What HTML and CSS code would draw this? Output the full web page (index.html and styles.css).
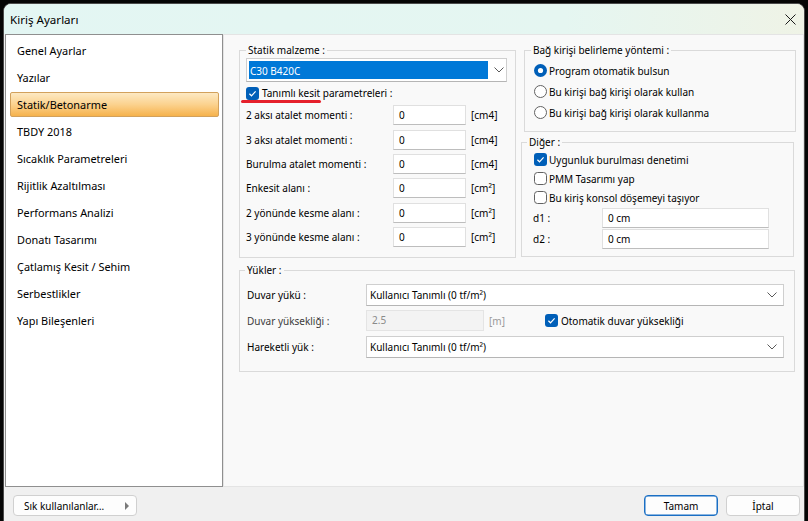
FILE: index.html
```html
<!DOCTYPE html>
<html lang="tr">
<head>
<meta charset="UTF-8">
<title>Kiriş Ayarları</title>
<link rel="stylesheet" href="styles.css">
</head>
<body>
<div class="win">
  <div class="titlebar">
    <span class="title">Kiriş Ayarları</span>
    <svg class="close" width="11" height="11" viewBox="0 0 11 11"><path d="M0.5 0.5L10.5 10.5M10.5 0.5L0.5 10.5" stroke="#1a1a1a" stroke-width="1" fill="none"/></svg>
  </div>

  <div class="main">
    <ul class="nav">
      <li>Genel Ayarlar</li>
      <li>Yazılar</li>
      <li class="on">Statik/Betonarme</li>
      <li>TBDY 2018</li>
      <li>Sıcaklık Parametreleri</li>
      <li>Rijitlik Azaltılması</li>
      <li>Performans Analizi</li>
      <li>Donatı Tasarımı</li>
      <li>Çatlamış Kesit / Sehim</li>
      <li>Serbestlikler</li>
      <li>Yapı Bileşenleri</li>
    </ul>

    <div class="content">
      <div class="top">
        <!-- statik malzeme -->
        <fieldset class="grp statik">
          <legend>Statik malzeme :</legend>
          <div class="sel sel-mat">
            <span class="hl">C30 B420C</span>
            <svg class="chev" width="10" height="6" viewBox="0 0 10 6"><path d="M0.5 0.5L5 5L9.5 0.5" stroke="#5a5a5a" fill="none"/></svg>
          </div>
          <div class="check mark-row">
            <svg width="13" height="13" viewBox="0 0 13 13"><rect width="13" height="13" rx="3" fill="#005fb8"/><path d="M3.4 6.8L5.5 8.8L9.6 4.4" stroke="#fff" stroke-width="1.2" fill="none"/></svg>
            <span>Tanımlı kesit parametreleri :</span>
            <i class="redline"></i>
          </div>
          <div class="frow"><label>2 aksı atalet momenti :</label><span class="inp">0</span><span class="unit">[cm4]</span></div>
          <div class="frow"><label>3 aksı atalet momenti :</label><span class="inp">0</span><span class="unit">[cm4]</span></div>
          <div class="frow"><label>Burulma atalet momenti :</label><span class="inp">0</span><span class="unit">[cm4]</span></div>
          <div class="frow"><label>Enkesit alanı :</label><span class="inp">0</span><span class="unit">[cm²]</span></div>
          <div class="frow"><label>2 yönünde kesme alanı :</label><span class="inp">0</span><span class="unit">[cm²]</span></div>
          <div class="frow"><label>3 yönünde kesme alanı :</label><span class="inp">0</span><span class="unit">[cm²]</span></div>
        </fieldset>

        <div class="rcol">
          <fieldset class="grp bag">
            <legend>Bağ kirişi belirleme yöntemi :</legend>
            <div class="radio">
              <svg width="13" height="13" viewBox="0 0 13 13"><circle cx="6.5" cy="6.5" r="6.5" fill="#005fb8"/><circle cx="6.5" cy="6.5" r="2.6" fill="#fff"/></svg>
              <span>Program otomatik bulsun</span>
            </div>
            <div class="radio">
              <svg width="13" height="13" viewBox="0 0 13 13"><circle cx="6.5" cy="6.5" r="6" fill="#fff" stroke="#626262"/></svg>
              <span>Bu kirişi bağ kirişi olarak kullan</span>
            </div>
            <div class="radio">
              <svg width="13" height="13" viewBox="0 0 13 13"><circle cx="6.5" cy="6.5" r="6" fill="#fff" stroke="#626262"/></svg>
              <span>Bu kirişi bağ kirişi olarak kullanma</span>
            </div>
          </fieldset>

          <fieldset class="grp diger">
            <legend>Diğer :</legend>
            <div class="check">
              <svg width="13" height="13" viewBox="0 0 13 13"><rect width="13" height="13" rx="3" fill="#005fb8"/><path d="M3.4 6.8L5.5 8.8L9.6 4.4" stroke="#fff" stroke-width="1.2" fill="none"/></svg>
              <span>Uygunluk burulması denetimi</span>
            </div>
            <div class="check">
              <svg width="13" height="13" viewBox="0 0 13 13"><rect x="0.5" y="0.5" width="12" height="12" rx="3" fill="#fff" stroke="#626262"/></svg>
              <span>PMM Tasarımı yap</span>
            </div>
            <div class="check">
              <svg width="13" height="13" viewBox="0 0 13 13"><rect x="0.5" y="0.5" width="12" height="12" rx="3" fill="#fff" stroke="#626262"/></svg>
              <span>Bu kiriş konsol döşemeyi taşıyor</span>
            </div>
            <div class="drow"><label>d1 :</label><span class="inp wide">0 cm</span></div>
            <div class="drow"><label>d2 :</label><span class="inp wide">0 cm</span></div>
          </fieldset>
        </div>
      </div>

      <fieldset class="grp yukler">
        <legend>Yükler :</legend>
        <div class="yrow">
          <label>Duvar yükü :</label>
          <div class="sel sel-load">
            <span>Kullanıcı Tanımlı (0 tf/m²)</span>
            <svg class="chev" width="10" height="6" viewBox="0 0 10 6"><path d="M0.5 0.5L5 5L9.5 0.5" stroke="#5a5a5a" fill="none"/></svg>
          </div>
        </div>
        <div class="yrow">
          <label class="dim">Duvar yüksekliği :</label>
          <span class="inp off">2.5</span>
          <span class="unit grey">[m]</span>
          <div class="check auto">
            <svg width="13" height="13" viewBox="0 0 13 13"><rect width="13" height="13" rx="3" fill="#005fb8"/><path d="M3.4 6.8L5.5 8.8L9.6 4.4" stroke="#fff" stroke-width="1.2" fill="none"/></svg>
            <span>Otomatik duvar yüksekliği</span>
          </div>
        </div>
        <div class="yrow">
          <label>Hareketli yük :</label>
          <div class="sel sel-load">
            <span>Kullanıcı Tanımlı (0 tf/m²)</span>
            <svg class="chev" width="10" height="6" viewBox="0 0 10 6"><path d="M0.5 0.5L5 5L9.5 0.5" stroke="#5a5a5a" fill="none"/></svg>
          </div>
        </div>
      </fieldset>
    </div>
  </div>

  <div class="footer">
    <div class="btn fav"><span>Sık kullanılanlar…</span><i class="tri"></i></div>
    <div class="btn ok">Tamam</div>
    <div class="btn">İptal</div>
  </div>
</div>
</body>
</html>
```

FILE: styles.css
```css
*{margin:0;padding:0;box-sizing:border-box;}
body{background:#050505;overflow:hidden;width:808px;height:521px;
	font-family:"Noto Sans",sans-serif;font-size:10px;color:#000;}

.win{margin:3px 0 0 3px;width:802px;height:530px;border:1px solid #4a4a4a;
	border-radius:8px 8px 0 0;background:#f0f0f0;overflow:hidden;}
.titlebar{height:30px;display:flex;align-items:center;justify-content:space-between;
	padding:0 8px 0 6px;background:linear-gradient(to right,#e3f6f3,#e5f6f1 70%,#eff3e6);}
.title{font-size:11.6px;}

.main{display:flex;height:453px;padding-left:1px;}
.nav{width:218px;border:1px solid #8f8f8f;background:#fff;list-style:none;padding:2px 3px 0 0;font-size:10.9px;}
.nav li{height:27px;line-height:27px;padding-left:11px;}
.nav li.on{height:25px;line-height:23px;margin:1px 0 1px 4px;padding-left:6px;
	border:1px solid #d2a15c;border-radius:2px;
	background:linear-gradient(#fde9c3,#fbd28e 50%,#f6b24c);}

.content{width:581px;background:#f9f9f9;border:1px solid #e4e4e4;padding:7px 0 0 15px;}
.top{display:flex;}

.grp{border:1px solid #dadada;}
.grp legend{padding:0 2px;line-height:16px;}

/* statik malzeme */
.statik{width:277px;height:216px;padding:0 0 0 6px;}
.sel{display:flex;align-items:center;background:#fff;border:1px solid #cfcfcf;border-bottom-color:#b5b5b5;}
.sel-mat{width:261px;height:24px;padding:2px;}
.sel-mat .hl{width:239px;height:100%;background:#0078d7;color:#fff;padding-left:1px;line-height:20px;}
.sel-mat .chev{margin-left:6px;}

.check,.radio{display:flex;align-items:center;gap:3px;}
.check svg,.radio svg{flex:none;}
.mark-row{position:relative;height:20px;margin-top:1px;}
.redline{position:absolute;left:-5px;top:17px;width:80px;height:2.5px;border-radius:2px;background:#e5202b;}

.frow{display:flex;align-items:center;height:24.4px;}
.frow label{width:147px;}
.inp{display:block;width:73px;height:20px;line-height:18px;padding-left:5px;background:#fff;
	border:1px solid #e0e0e0;border-bottom-color:#bdbdbd;}
.unit{margin-left:5px;}

/* right column */
.rcol{margin-left:8px;}
.bag{width:272px;height:90px;padding:2px 0 0 9px;}
.bag legend{margin-left:-3px;}
.radio{height:21px;gap:2px;}
.diger{width:273px;height:123px;margin:2px 0 0 -3px;padding:0 0 0 12px;}
.diger legend{margin-left:-7px;}
.diger .check{height:19px;gap:2px;}
.drow{display:flex;align-items:center;height:21px;}
.drow label{width:69px;margin-left:-1px;}
.inp.wide{width:167px;}

/* yukler */
.yukler{width:556px;height:110px;margin-top:4px;padding:3.5px 0 0 7px;}
.yukler legend{margin-left:-2px;}
.yrow{display:flex;align-items:center;height:26px;}
.yrow label{width:119px;}
.yrow label.dim{color:#3c3c3c;}
.sel-load{width:418px;height:22px;justify-content:space-between;padding:0 6px 0 3px;}
.inp.off{width:118px;height:21px;background:#f3f3f3;border-color:#e4e4e4;color:#8a8a8a;}
.unit.grey{color:#9a9a9a;}
.auto{margin-left:40px;}

/* footer */
.footer{height:36px;display:flex;align-items:flex-start;padding:8px 4px 0 9px;}
.btn{height:21px;width:74px;display:flex;align-items:center;justify-content:center;
	background:#fdfdfd;border:1px solid #d0d0d0;border-radius:4px;}
.btn.fav{width:124px;justify-content:space-between;padding:0 7px 0 10px;}
.tri{width:0;height:0;border-left:4px solid #7a7a7a;border-top:4px solid transparent;border-bottom:4px solid transparent;}
.btn + .btn{margin-left:8px;}
.btn.ok{margin-left:auto;border-color:#1a6fc4;box-shadow:inset 0 0 0 0.5px #1a6fc4;}
```
